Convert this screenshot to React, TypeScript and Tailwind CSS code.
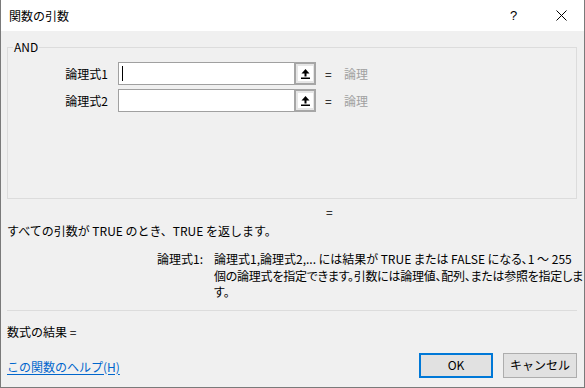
import React from 'react'

const ROWS = ['論理式1', '論理式2']

function RefButton() {
  return (
    <div className="w-[22px] h-[23px] border-2 border-[#a6a6a6] bg-[#e6e6e6] flex items-center justify-center">
      <div className="w-[15px] h-[15px] bg-white flex items-center justify-center">
        <svg width="9" height="10" viewBox="0 0 9 10">
          <polygon points="4.5,0 8.5,4.5 0.5,4.5" fill="#000" />
          <rect x="3.5" y="4" width="2" height="3.5" fill="#000" />
          <rect x="0" y="8.5" width="9" height="1.5" fill="#000" />
        </svg>
      </div>
    </div>
  )
}

export default function App() {
  return (
    <div className="w-[585px] h-[388px] bg-[#f0f0f0] border-x border-b border-[#7a7a7a] flex flex-col text-[12px] text-black font-['Noto_Sans_CJK_JP','Noto_Sans',sans-serif]">
      {/* title bar */}
      <div className="h-[31px] bg-white flex items-center pl-[8px] shrink-0">
        <span className="leading-[16px]">関数の引数</span>
        <span className="ml-auto text-[13px] leading-[16px] w-[10px] font-['Liberation_Sans',sans-serif]">?</span>
        <svg className="ml-[36px] mr-[17px]" width="11" height="11" viewBox="0 0 11 11">
          <path d="M0.5 0.5 L10.5 10.5 M10.5 0.5 L0.5 10.5" stroke="#000" strokeWidth="1" />
        </svg>
      </div>

      <div className="flex-1 flex flex-col pl-[6px] pr-[7px]">
        <fieldset className="mt-[8px] h-[160px] border border-[#dcdcdc]">
          <legend className="ml-[5px] px-[1px] leading-[16px]">AND</legend>
          <div className="pt-[7px] flex flex-col gap-[4px]">
            {ROWS.map((label, i) => (
              <div key={label} className="flex items-center h-[23px]">
                <div className="w-[100px] text-right leading-[16px]">{label}</div>
                <div className="ml-[10px] w-[176px] h-[23px] bg-white border border-[#a0a0a0] border-r-0 flex items-center pl-[3px]">
                  {i === 0 && <div className="w-px h-[15px] bg-black" />}
                </div>
                <RefButton />
                <span className="ml-[9px] w-[9px] leading-[16px]">=</span>
                <span className="ml-[10px] text-[#a0a0a0] leading-[16px]">論理</span>
              </div>
            ))}
          </div>
        </fieldset>

        <div className="mt-[6px] pl-[319px] leading-[14px]">=</div>

        <div className="mt-[4px] leading-[16px] whitespace-nowrap">すべての引数が TRUE のとき、TRUE を返します。</div>

        <div className="mt-[12px] flex pl-[150px] leading-[16.5px]">
          <div className="w-[57px] shrink-0">論理式1:</div>
          <div className="whitespace-nowrap [font-feature-settings:'palt']">
            <div>論理式1,論理式2,... には結果が TRUE または FALSE になる、1 ～ 255</div>
            <div className="tracking-[-0.25px]">個の論理式を指定できます。引数には論理値、配列、または参照を指定しま</div>
            <div>す。</div>
          </div>
        </div>

        <div className="mt-[9px] border-t border-[#dcdcdc]" />

        <div className="mt-[13px] leading-[16px]">数式の結果 =</div>

        <div className="mt-[13px] flex items-center">
          <a href="#" className="pt-[3px] leading-[16px] text-[#0066cc] underline underline-offset-2">
            この関数のヘルプ(H)
          </a>
          <button className="ml-auto w-[74px] h-[25px] border-2 border-[#0078d7] bg-[#e1e1e1] leading-[16px]">OK</button>
          <button className="ml-[10px] w-[74px] h-[25px] border border-[#adadad] bg-[#e1e1e1] leading-[16px]">キャンセル</button>
        </div>
      </div>
    </div>
  )
}
